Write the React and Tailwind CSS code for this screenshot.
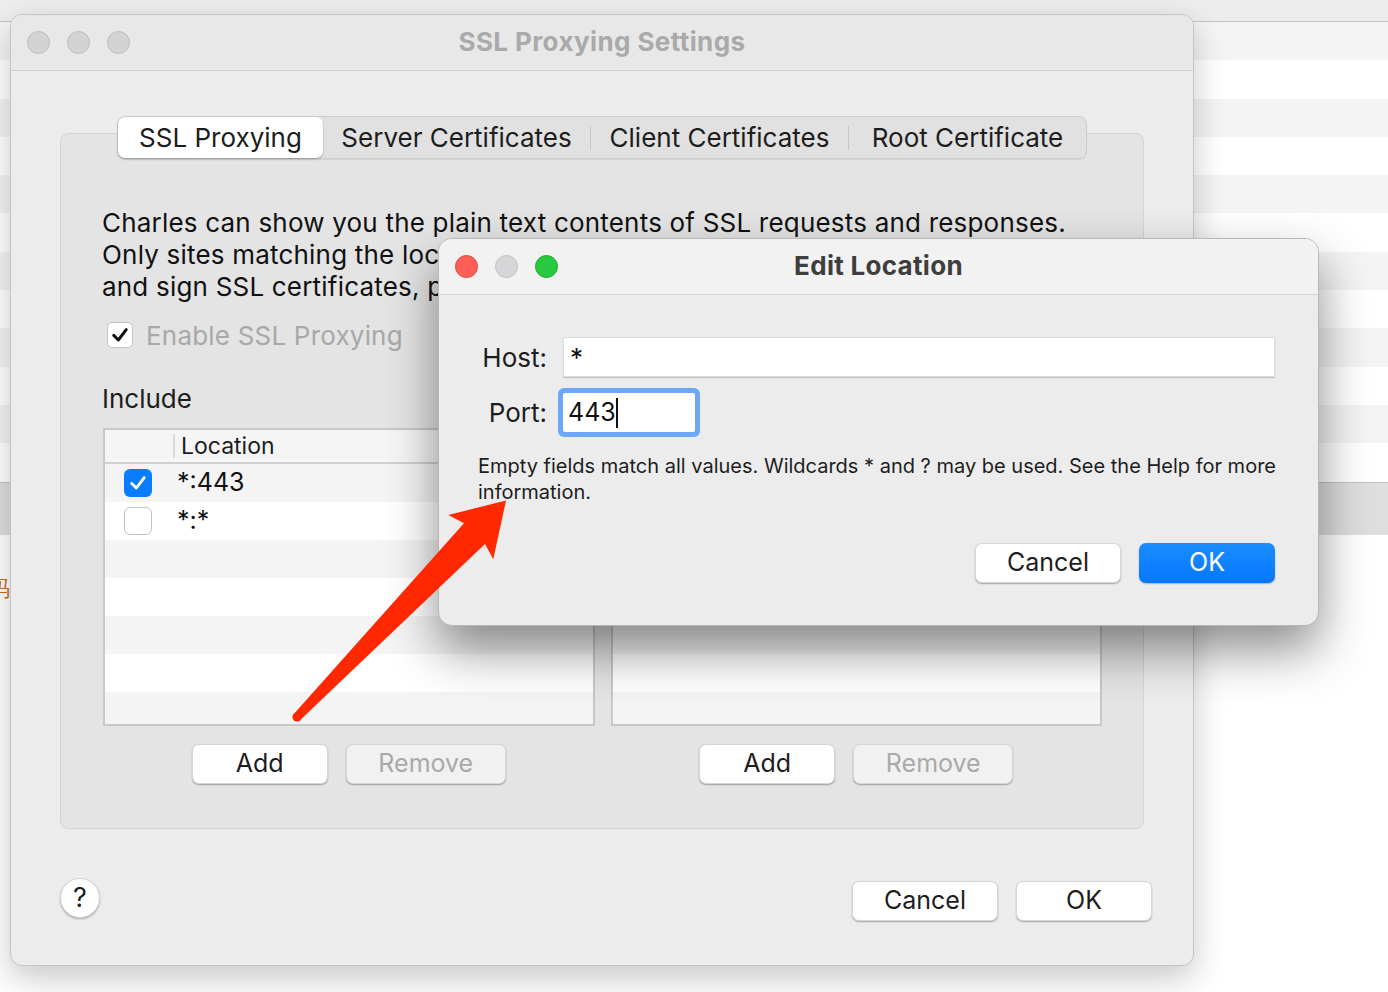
import React from "react";

const bgRows = Array.from({ length: 12 });
const tableRows = Array.from({ length: 7 });

function Check({ color = "#111", w = 3.2 }) {
  return (
    <svg viewBox="0 0 24 24" className="w-[20px] h-[20px]">
      <path d="M4.5 12.5 L10 18 L19.5 5.5" fill="none" stroke={color} strokeWidth={w} strokeLinecap="round" strokeLinejoin="round" />
    </svg>
  );
}

function PushButton({ children, className = "", disabled }) {
  return (
    <div
      className={`h-[40px] rounded-[7px] flex items-center justify-center text-[25px] shadow-[0_1px_1.5px_rgba(0,0,0,0.3)] border border-[#d6d6d6] ${
        disabled ? "bg-[#f1f1f1] text-[#a9a9a9]" : "bg-white text-[#1d1d1d]"
      } ${className}`}
    >
      {children}
    </div>
  );
}

function LocationTable({ items }) {
  return (
    <div className="h-[298px] border-2 border-[#c8c8c8] bg-white flex flex-col overflow-hidden">
      <div className="h-[34px] shrink-0 bg-[#f5f5f5] border-b-2 border-[#d0d0d0] flex items-center">
        <div className="w-[70px] h-[24px] border-r-2 border-[#dadada]" />
        <span className="pl-[6px] text-[23px] text-[#1d1d1d]">Location</span>
      </div>
      {tableRows.map((_, i) => {
        const item = items[i];
        return (
          <div key={i} className={`h-[38px] shrink-0 flex items-center ${i % 2 === 0 ? "bg-[#f4f4f4]" : "bg-white"}`}>
            {item && (
              <>
                <div className="w-[72px] pl-[19px]">
                  {item.checked ? (
                    <div className="w-[28px] h-[28px] rounded-[6px] bg-[#0a7cff] flex items-center justify-center">
                      <Check color="#fff" w={3.4} />
                    </div>
                  ) : (
                    <div className="w-[28px] h-[28px] rounded-[6px] bg-white border border-[#c4c4c4]" />
                  )}
                </div>
                <span className="text-[25px] text-[#111]">{item.label}</span>
              </>
            )}
          </div>
        );
      })}
    </div>
  );
}

function TableColumn({ items }) {
  return (
    <div className="flex flex-col">
      <LocationTable items={items} />
      <div className="mt-[18px] flex justify-center gap-[18px]">
        <PushButton className="w-[136px]">Add</PushButton>
        <PushButton className="w-[160px]" disabled>
          Remove
        </PushButton>
      </div>
    </div>
  );
}

export default function App() {
  return (
    <div className="relative w-[1388px] h-[992px] overflow-hidden bg-white font-['Inter','Noto_Sans',sans-serif]">
      {/* app behind the windows */}
      <div className="flex flex-col">
        <div className="h-[22px] bg-[#ededed] border-b border-[#c4c4c4]" />
        {bgRows.map((_, i) => (
          <div key={i} className={`h-[38.3px] ${i % 2 === 0 ? "bg-[#f4f4f4]" : "bg-white"}`} />
        ))}
        <div className="h-[53px] bg-[#dedede] border-t border-[#c2c2c2]" />
        <div className="h-[108px] flex items-center">
          <span className="-ml-[12px] text-[22px] text-[#d26a1e]">码</span>
        </div>
      </div>

      {/* SSL Proxying Settings window */}
      <div className="absolute left-[10px] top-[14px] w-[1184px] h-[952px] rounded-[12px] bg-[#ececec] border border-[#c4c4c4] shadow-[0_12px_32px_rgba(0,0,0,0.22)] flex flex-col overflow-hidden">
        <div className="h-[56px] shrink-0 bg-[#e8e8e8] border-b border-[#cfcfcf] grid grid-cols-[1fr_auto_1fr] items-center px-[16px]">
          <div className="flex gap-[17px]">
            <span className="block w-[23px] h-[23px] rounded-full bg-[#d3d3d3] border border-[#bcbcbc]" />
            <span className="block w-[23px] h-[23px] rounded-full bg-[#d3d3d3] border border-[#bcbcbc]" />
            <span className="block w-[23px] h-[23px] rounded-full bg-[#d3d3d3] border border-[#bcbcbc]" />
          </div>
          <div className="text-[26px] tracking-[0.4px] font-bold text-[#aaaaaa] -mt-[2px]">SSL Proxying Settings</div>
          <div />
        </div>

        <div className="flex-1 flex flex-col px-[49px]">
          <div className="mt-[62px] h-[696px] shrink-0 rounded-[8px] border border-[#d4d4d4] bg-[#e4e4e4] flex flex-col px-[41px]">
            <div className="-mt-[18px] self-center h-[43px] flex items-center rounded-[8px] bg-[#e1e1e1] border border-[#cdcdcd] shadow-[0_1px_1px_rgba(0,0,0,0.08)] text-[26px] text-[#1d1d1d]">
              <div className="w-[205px] h-[41px] rounded-[7px] bg-white shadow-[0_1px_2px_rgba(0,0,0,0.3)] flex items-center justify-center">
                SSL Proxying
              </div>
              <div className="w-[267px] flex items-center justify-center">Server Certificates</div>
              <div className="w-px h-[24px] bg-[#c8c8c8]" />
              <div className="w-[257px] flex items-center justify-center">Client Certificates</div>
              <div className="w-px h-[24px] bg-[#c8c8c8]" />
              <div className="w-[237px] flex items-center justify-center">Root Certificate</div>
            </div>

            <p className="mt-[48px] text-[26px] tracking-[0.2px] leading-[32px] text-[#111] whitespace-nowrap">
              Charles can show you the plain text contents of SSL requests and responses.
              <br />
              Only sites matching the locations listed below will be proxied. Charles will issue
              <br />
              and sign SSL certificates, please press the Help button for more information.
            </p>

            <div className="mt-[16px] h-[32px] flex items-center gap-[13px] pl-[5px]">
              <div className="w-[26px] h-[26px] rounded-[5px] bg-white border border-[#c2c2c2] flex items-center justify-center">
                <Check w={3.6} />
              </div>
              <span className="text-[26px] tracking-[0.2px] text-[#a8a8a8]">Enable SSL Proxying</span>
            </div>

            <div className="mt-[32px] text-[26px] leading-[32px] text-[#1d1d1d]">Include</div>

            <div className="mt-[13px] grid grid-cols-2 gap-[16px] pl-px">
              <TableColumn
                items={[
                  { checked: true, label: "*:443" },
                  { checked: false, label: "*:*" },
                ]}
              />
              <TableColumn items={[]} />
            </div>
          </div>

          <div className="flex-1 flex items-center pt-[8px]">
            <div className="w-[40px] h-[40px] rounded-full bg-white shadow-[0_1px_2px_rgba(0,0,0,0.3)] border border-[#d6d6d6] flex items-center justify-center text-[27px] text-[#1d1d1d] -mt-[6px]">
              ?
            </div>
            <div className="flex-1" />
            <div className="flex gap-[18px] -mr-[8px]">
              <PushButton className="w-[146px]">Cancel</PushButton>
              <PushButton className="w-[136px]">OK</PushButton>
            </div>
          </div>
        </div>
      </div>

      {/* Edit Location dialog */}
      <div className="absolute left-[438px] top-[238px] w-[881px] h-[388px] rounded-[14px] bg-[#ececec] border border-[#b8b8b8] shadow-[0_24px_50px_rgba(0,0,0,0.45)] flex flex-col overflow-hidden">
        <div className="h-[56px] shrink-0 bg-[#f2f2f3] border-b border-[#d3d3d3] grid grid-cols-[1fr_auto_1fr] items-center px-[16px]">
          <div className="flex gap-[17px]">
            <span className="block w-[23px] h-[23px] rounded-full bg-[#ff5f57] border border-[#e2463f]" />
            <span className="block w-[23px] h-[23px] rounded-full bg-[#d6d6d8] border border-[#c0c0c2]" />
            <span className="block w-[23px] h-[23px] rounded-full bg-[#28c840] border border-[#1dad2b]" />
          </div>
          <div className="text-[26px] tracking-[0.3px] font-bold text-[#3e3e3e] -mt-[2px]">Edit Location</div>
          <div />
        </div>

        <div className="flex-1 flex flex-col pl-[39px] pr-[43px] pt-[42px]">
          <div className="grid grid-cols-[69px_1fr] gap-x-[16px] gap-y-[16px] items-center text-[26px] text-[#1d1d1d]">
            <div className="text-right">Host:</div>
            <div className="h-[40px] bg-white border border-[#dcdcdc] shadow-[0_1px_1px_rgba(0,0,0,0.18)] flex items-center px-[6px] text-[#111]">
              *
            </div>
            <div className="text-right">Port:</div>
            <div className="w-[132px] h-[39px] bg-white rounded-[2px] shadow-[0_0_0_5px_#6da8f7] flex items-center px-[5px] text-[25px] text-[#111]">
              443
              <span className="block w-[2px] h-[30px] bg-[#111]" />
            </div>
          </div>

          <p className="mt-[21px] text-[20px] leading-[26px] text-[#1d1d1d] whitespace-nowrap">
            Empty fields match all values. Wildcards * and ? may be used. See the Help for more
            <br />
            information.
          </p>

          <div className="mt-[38px] flex justify-end gap-[18px]">
            <PushButton className="w-[146px]">Cancel</PushButton>
            <div className="w-[136px] h-[40px] rounded-[7px] bg-[#0a80ff] bg-gradient-to-b from-[#1a8dff] to-[#0577ff] shadow-[0_1px_1.5px_rgba(0,0,0,0.25)] flex items-center justify-center text-[25px] text-white">
              OK
            </div>
          </div>
        </div>
      </div>

      {/* red annotation arrow */}
      <svg className="absolute inset-0 pointer-events-none" width="1388" height="992" viewBox="0 0 1388 992">
        <path d="M293.8 713.9 L464 523.3 L448.3 515 L506 500.5 L493.3 559.3 L485 544 L300.2 720.1 Z" fill="#ff2800" />
        <circle cx="297" cy="717" r="4.6" fill="#ff2800" />
      </svg>
    </div>
  );
}
